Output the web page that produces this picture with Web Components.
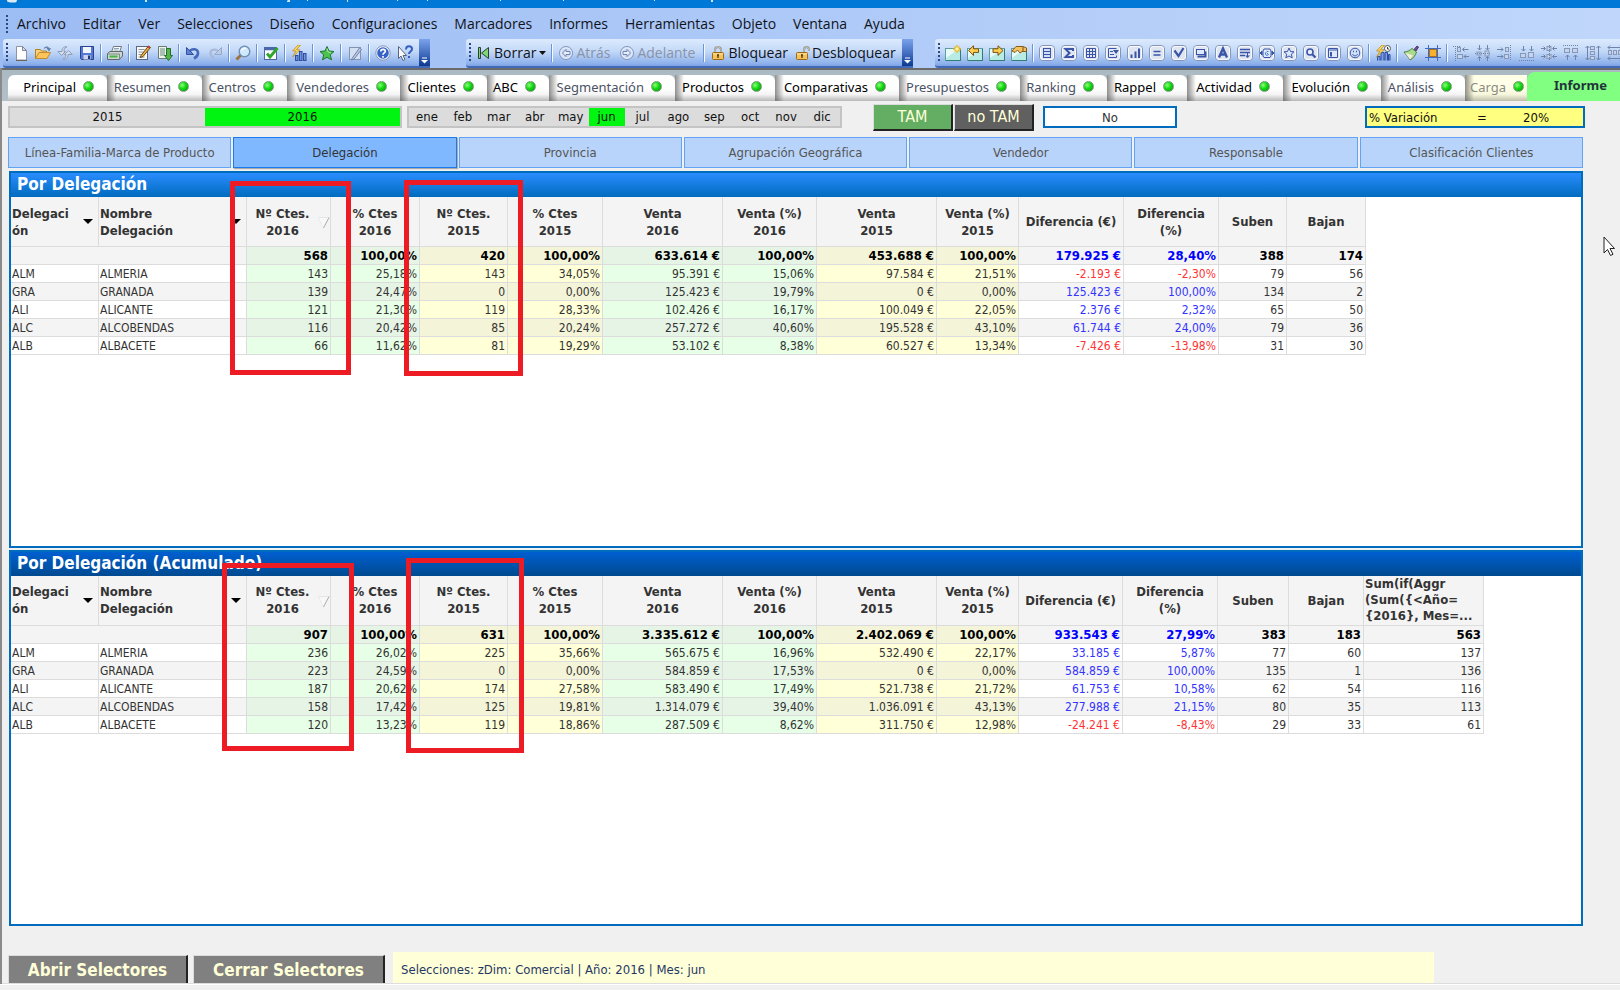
<!DOCTYPE html>
<html lang="es">
<head>
<meta charset="utf-8">
<title>Informe por Delegación</title>
<style>
  html, body { margin: 0; height: 100%; }
  body { font-family: "DejaVu Sans Condensed", "DejaVu Sans", sans-serif; font-size: 12px; color: #333; background: #f0f0f0; overflow: hidden; }
</style>
</head>
<body>
<report-app></report-app>

<script>
const define = (name, css, html) => customElements.define(name, class extends HTMLElement {
  connectedCallback() {
    if (this.shadowRoot) return;
    const root = this.attachShadow({ mode: "open" });
    root.innerHTML = `<style>*{box-sizing:border-box}button,input{font:inherit;color:inherit;margin:0}${css}</style>${typeof html === "function" ? html(this) : html}`;
  }
});

/* ---------- toolbar icons, 16 x 16 ---------- */
const boxed = inner => `<rect x=".5" y=".5" width="15" height="15" rx="3.5" fill="#dfe6f2" stroke="#8494b4"/><rect x="1.5" y="1.5" width="13" height="13" rx="2.5" fill="none" stroke="#f6f9ff"/>${inner}`;
const B = "#3a55a8";
const sheet = inner => `<rect x=".5" y="3.5" width="15" height="12" fill="#b9ebe5" stroke="#5b9ea0"/><path d="M1 13V4h13z" fill="#e6faf7"/><path d="M15.5 4v11.5H1" fill="none" stroke="#2f7f74"/>${inner}`;
const lock = shackle => `<path d="${shackle}" fill="none" stroke="#8b8b86" stroke-width="2"/><path d="${shackle}" fill="none" stroke="#e2e0d6" stroke-width=".8"/><rect x="2.5" y="7.5" width="11" height="7" rx="1" fill="#f5c25a" stroke="#9c6a1c"/><path d="M3 9h10" stroke="#fde6a8"/><path d="M8 9.5v3.5M7 10h2" stroke="#5a3b0c" stroke-width="1.4"/>`;
const circ = d => `<circle cx="8" cy="8" r="6.5" fill="#cddcf5" stroke="#8494b8"/><circle cx="8" cy="8" r="5.2" fill="none" stroke="#eef3fd" stroke-width=".8"/><path d="${d}" fill="#e8effc" stroke="#7285b2"/>`;
const bolt = '<path d="M7 0 1.5 6H5L1.5 12 9 4.800H5.500L9.500 0z" fill="#ffd95c" stroke="#b88414" stroke-width=".7"/>';
const AL = "#8797b4";
const al = (rects, lines) => rects.map(r => `<rect x="${r[0]}" y="${r[1]}" width="${r[2]}" height="${r[3]}" fill="#c3d4f3" stroke="${AL}"/>`).join("") + `<path d="${lines[0]}" fill="none" stroke="#6f83aa"/>` + (lines[1] ? `<path d="${lines[1]}" fill="none" stroke="#6f83aa" stroke-dasharray="1 1"/>` : "");
const ICONS = {
  new: '<path d="M3.500 1.500h6l4 4v9.500h-10z" fill="#fff" stroke="#8b93a5"/><path d="M9.500 1.500v4h4z" fill="#dce3f0" stroke="#7c8496"/><path d="M3 15.500h11" stroke="#6b6258"/>',
  open: '<path d="M.5 13.500V4.500h5l1 1.500h5v2" fill="#f6d27a" stroke="#b5811f"/><path d="M.5 13.500 4 7.500h11.500l-3.500 6z" fill="#fdc45c" stroke="#c4892a"/><path d="M9 3.500c2-2.500 5-1.500 5 1.500M12 3l2 2.500L15.500 3" fill="none" stroke="#5a7ea8" stroke-width="1.200"/>',
  reload: '<path d="M5 6.500 .8 6.500 4.500 10.500 8.500 6.500H7C7 3.500 8 2.500 10 2 6.500 1 5 3.500 5 6.500z" fill="#d3dcec" stroke="#8e9cb8"/><path d="M11 9.500h4.200L11.500 5.500 7.500 9.500H9c0 3-1 4-3 4.500 3.500 1 5-1.500 5-4.500z" fill="#d3dcec" stroke="#8e9cb8"/>',
  save: '<path d="M1.500 1.500h13v13h-12l-1-1z" fill="#5379d8" stroke="#2c418c"/><rect x="4" y="2" width="8" height="6" fill="#f2f5fd"/><rect x="4.500" y="10" width="7" height="4.500" fill="#c9d3ea"/><rect x="9" y="10.500" width="2" height="3.500" fill="#24366f"/>',
  print: '<path d="M4.500 7 6.500 1.500h8L12.500 7z" fill="#fff" stroke="#6c7787"/><path d="M7 3.500h5M6.500 5h5" stroke="#8fa5bb"/><path d="M.5 8.500 3 6.500h12.500V11l-3 3.500H.5z" fill="#cfd6d2" stroke="#5d6b68"/><path d="M1 9h11.500v5.500" fill="none" stroke="#7c8a86"/><rect x="2.500" y="10.500" width="8" height="2" fill="#43b544"/>',
  script: '<rect x="1.500" y="1.500" width="11" height="13" fill="#f7faf3" stroke="#5a6784"/><path d="M3.500 4.500h6M3.500 7h5M3.500 9.500h3M3.500 12h6" stroke="#8893a8"/><path d="M6 10.500 13.500 1l2 1.500L8 11.500l-2.500 1z" fill="#f0b740" stroke="#6b4014"/><path d="m13 1.500 2 1.500" stroke="#c5403a" stroke-width="2"/>',
  partial: '<path d="M1.500 1.500h8v12h-8z" fill="#eef6ec" stroke="#6d7b74"/><path d="M3 4h5M3 6h5M3 8h5M3 10h5" stroke="#68887c"/><path d="M9.500 3.500h4v7h2L11.500 15.500 7.500 10.500h2z" fill="#55b54a" stroke="#23702a"/>',
  undo: '<path d="M4 7.500C6 3 13.500 3 13 8.500c-.3 2.500-2 4-4 5" fill="none" stroke="#4668bc" stroke-width="2.600"/><path d="M1.500 2.500v7h7z" fill="#5e80d2" stroke="#35509c"/>',
  redo: '<path d="M12 7.500C10 3.500 3 3.500 3.500 8.500c.3 2.500 2 4 4 5" fill="none" stroke="#a9b9d8" stroke-width="2.400"/><path d="M14.500 2.500v7h-7z" fill="#bccae4" stroke="#98a9c9"/>',
  search: '<path d="M1.500 14.500 6.500 9.500" stroke="#a0713a" stroke-width="3"/><circle cx="9.500" cy="6.500" r="5.300" fill="#cfeafd" stroke="#6f8fb4" stroke-width="1.400"/><path d="M6.500 5.500c1-2 3-2.500 4.500-2" fill="none" stroke="#fff" stroke-width="1.400"/>',
  check: '<rect x="1.500" y="2.500" width="12" height="12" fill="#fff" stroke="#4a68a8"/><path d="M1.500 4h12" stroke="#4a68a8" stroke-width="2.500"/><path d="m4 8.500 3 3.500 7.500-9" fill="none" stroke="#2fa52c" stroke-width="2.800"/>',
  chart: '<rect x="4.500" y="10.500" width="2.500" height="5" fill="#6f92dc" stroke="#2c4da0"/><rect x="8.500" y="6.500" width="2.500" height="9" fill="#6f92dc" stroke="#2c4da0"/><rect x="12.500" y="8.500" width="2.500" height="7" fill="#6f92dc" stroke="#2c4da0"/>' + bolt,
  star: '<path d="m8 1.500 2 4.500 5 .5-3.700 3.300 1.200 5L8 12.300l-4.500 2.500 1.200-5L1 6.500 6 6z" fill="#4cc34f" stroke="#1c7434"/><path d="m8 3.500 1 3.500 3 .5" fill="none" stroke="#a6eba0"/>',
  note: '<rect x="2.500" y="2.500" width="11" height="12" fill="#d3dff3" stroke="#8593b2"/><path d="M5 13.500 12.500 3l2 1.500L7 14l-2.500 1z" fill="#bccbe6" stroke="#6f80a4"/>',
  help: '<circle cx="8" cy="8" r="7.200" fill="#f2f6ff" stroke="#8996b4"/><circle cx="8" cy="8" r="5.800" fill="#3762c8"/><path d="M5.800 6.500c0-3 4.500-2.800 4.500-.3C10.300 8 8 7.800 8 9.800M8 11v1.800" fill="none" stroke="#fff" stroke-width="1.700"/>',
  whats: '<path d="M1.500 1.500v12L4 11l2 4.500 2-1L6 10.500h3.500z" fill="#f7f9fd" stroke="#59657f"/><path d="M9 4.500C9 0 15 .5 15 4c0 2.500-3 2.500-3 5M12 11v2" fill="none" stroke="#3560c0" stroke-width="2"/>',
  clear: '<path d="M2.500 2.500h2v11h-2zM12.500 2.500v11l-7-5.500z" fill="#7fd674" stroke="#27402f"/>',
  back: circ("M8 4.500 4.500 8 8 11.500V9.500h4v-3H8z"),
  fwd: circ("M8 4.500 11.500 8 8 11.500V9.500H4v-3h4z"),
  lock: lock("M5 8V4.500C5 1 11 1 11 4.500V8"),
  unlock: lock("M10 8V5c0-4 5-4 5 0v1"),
  sheetnew: sheet('<path d="M12 0v8M8 4h8M9.500 1.500l5 5M14.500 1.500l-5 5" stroke="#e8b820" stroke-width="1.300"/><circle cx="12" cy="4" r="1.800" fill="#fff3a0"/>'),
  sheetprev: sheet('<path d="M1.500 5.500 6.500.8v3h5v3.600h-5v3z" fill="#fbd04e" stroke="#7d4f12"/>'),
  sheetnext: sheet('<path d="M14 5.500 9 .8v3H4v3.600h5v3z" fill="#fbd04e" stroke="#7d4f12"/>'),
  sheetprop: sheet('<path d="M1 6 5 1.500h7L15.500 3v3.500H11L9 8 6.500 5 4 7.500z" fill="#f3c25c" stroke="#8a5a1c"/><path d="M12 2v4" stroke="#76501e"/>'),
  list: boxed(`<rect x="4.500" y="3.500" width="7" height="9" fill="#cfddf7" stroke="${B}"/><path d="M5 6.500h6M5 9.500h6" stroke="${B}"/>`),
  sigma: boxed(`<path d="M12 6V4H4.500L8.500 8 4.500 12H12V10" fill="none" stroke="${B}" stroke-width="2"/>`),
  grid: boxed(`<path d="M3.500 3.500h9v9h-9zM3.500 6.500h9M3.500 9.500h9M6.500 3.500v9M9.500 3.500v9" fill="none" stroke="${B}"/>`),
  multi: boxed(`<path d="M3.500 3.500h8M3.500 3.500v9h8v-2M5 6.500h3M5 9.500h4" fill="none" stroke="${B}"/><path d="M8 5h6l-3 4z" fill="${B}"/>`),
  bars: boxed(`<path d="M4.500 13V9.500M8.500 13V6.500M12 13V3.500" stroke="${B}" stroke-width="2"/>`),
  equal: boxed(`<path d="M4.500 6.500h7M4.500 10h7" stroke="${B}" stroke-width="1.600"/>`),
  tick: boxed(`<path d="M3.500 5.500 7.500 11l5-8" fill="none" stroke="${B}" stroke-width="2.200"/>`),
  btn: boxed(`<path d="M4.500 11.500h8v-5" fill="none" stroke="${B}" stroke-width="2"/><rect x="3.500" y="4.500" width="8" height="5" fill="#dfe9fb" stroke="${B}"/>`),
  text: boxed(`<path d="M4 12.500 8 3.500l4 9M5.500 9.500h5" fill="none" stroke="${B}" stroke-width="2.400"/>`),
  lines: boxed(`<path d="M3 4.500h10M3 7.500h10M3 10.500h5" stroke="${B}" stroke-width="1.400"/><path d="M8 10.500h5L10.500 13z" fill="${B}"/><path d="M10.500 8v3" stroke="${B}"/>`),
  slider: boxed(`<path d="M5 4h6l1 2v5l-1 1.500H5L4 11V6z" fill="#dfe9fb" stroke="${B}"/><path d="m3 6-2 2 2 2zM13 6l2 2-2 2z" fill="${B}" stroke="${B}"/><path d="M9.500 6.500H8L6.500 8v1.500L8 10.500l1.500-1L8 8" fill="none" stroke="#3f7fd0"/>`),
  bmark: boxed(`<path d="m8 3 1.500 3.500 3.500.3-2.700 2.400.9 3.600L8 11l-3.200 1.800.9-3.600L3 6.800l3.500-.3z" fill="#dbe8fb" stroke="${B}"/>`),
  find: boxed(`<circle cx="7" cy="7" r="3" fill="#e8f0fd" stroke="${B}" stroke-width="1.600"/><path d="m9.500 9.500 3 3" stroke="${B}" stroke-width="2.200"/>`),
  panel: boxed(`<path d="M3.500 3.500h9v9h-9z" fill="#dfe9fb" stroke="${B}"/><path d="M3.500 5h9" stroke="${B}"/><rect x="5" y="7" width="2" height="4.500" fill="${B}"/>`),
  smile: boxed(`<circle cx="8" cy="8" r="4.800" fill="#cfe0fa" stroke="${B}"/><path d="M5.500 9c1 2.500 4 2.500 5 0" fill="none" stroke="${B}"/><path d="M6 6.500h1M9 6.500h1" stroke="${B}" stroke-width="1.600"/>`),
  chart2: '<path d="M6 15.500V7.500h3v8M10 15.500v-8h2.500v8M13.500 15.500v-6H15v6M2.500 15.500v-4H5v4" fill="#7d9fe4" stroke="#2c4da0"/><circle cx="12.500" cy="3.500" r="3" fill="#fff" stroke="#555"/><path d="M12.500 2v2H14" fill="none" stroke="#333"/>' + bolt,
  brush: '<path d="M11 4.500 14 1l1.500 1-2.500 4z" fill="#6f4f94" stroke="#51376f"/><path d="M1 7c3 0 6-1.500 8-3.500L13.500 7C12.500 10.500 10 13.500 7 15 5.500 12 3 9.500 1 7z" fill="#a9dc8e" stroke="#4d7f43"/><path d="m2 7.500 5 7 3-4z" fill="#f2ecd8"/>',
  snap: '<path d="M0 3.500h16M0 12.500h16M3.500 0v16M12.500 0v16" stroke="#3f6cc0"/><rect x="4.500" y="4.500" width="7" height="7" fill="#f8b030" stroke="#a8701c"/>',
  a1: al([[4.500,2.500,3,4],[4.500,9.500,5,4]], ["M9.500 4.500h6M11.500 2.500l-2 2 2 2M11 11.500h5M13 9.500l-2 2 2 2", "M2.500 1v15M0 1.500h8"]),
  a2: al([[2,7,4,3],[10,6,4,5]], ["M4.500 0v5M2.500 3l2 2 2-2M4.500 16v-4M2.500 13.500l2-2 2 2M12.500 0v4.500M10.500 3l2 2 2-2M12.500 16v-4M10.500 13.500l2-2 2 2", "M0 8.500h16"]),
  a3: al([[8.500,2.500,3,4],[7.500,9.500,4,4]], ["M0 4.500h6M4 2.500l2 2-2 2M0 11.500h6M4 9.500l2 2-2 2", "M13.500 0v16"]),
  a4: al([[1.500,8.500,5,4],[9.500,7.500,5,5]], ["M4.500 1v5M2.500 4l2 2 2-2M12.500 1v5M10.500 4l2 2 2-2", "M0 15.500h16"]),
  a5: al([[6,1.500,4,4],[6,9.500,4,4]], ["M0 3.500h4M2.500 1.500l2 2-2 2M16 3.500h-4M13.500 1.500l-2 2 2 2M0 11.500h4M2.500 9.500l2 2-2 2M16 11.500h-4M13.500 9.500l-2 2 2 2", "M8.500 0v16"]),
  a6: al([[1.500,3.500,5,4],[9.500,3.500,5,4]], ["M4.500 15v-5M2.500 12l2-2 2 2M12.500 15v-5M10.500 12l2-2 2 2", "M0 .5h16"]),
  a7: al([[5.500,1.500,4,3],[5.500,6.500,4,3],[5.500,11.500,4,3]], ["M2.500 1v14M.5 3l2-2 2 2M.5 13l2 2 2-2M13.500 1v14M11.500 3l2-2 2 2M11.500 13l2 2 2-2"]),
  a8: al([[1.500,5.500,3,4],[6.500,5.500,3,4],[11.500,5.500,3,4]], ["M1 2.500h14M3 .5l-2 2 2 2M13 .5l2 2-2 2M1 13.500h14M3 11.500l-2 2 2 2M13 11.500l2 2-2 2"])
};

define("tool-icon", `
  :host { display: block; flex: none; }
  button { display: flex; align-items: center; gap: 2px; height: 22px; padding: 0 3px; border: 0; background: none; white-space: nowrap; }
  svg { display: block; flex: none; width: 16px; height: 16px; }
  :host([off]) button { color: #8a93a8; padding-right: 6px; }`,
  el => `<button type="button" aria-label="${el.getAttribute("name")}"><svg viewBox="0 0 16 16" aria-hidden="true">${ICONS[el.getAttribute("name")]}</svg><slot></slot></button>`);

define("tool-sep", `:host { display: block; flex: none; box-sizing: border-box; width: 2px; height: 18px; margin: 0 2px; background: #6c94d8; border-right: 1px solid #f4f8ff; }`, "");

define("tool-bar", `
  :host { display: flex; align-items: center; flex: none; box-sizing: border-box; height: 29px; border-radius: 3px 0 0 3px; overflow: hidden;
    background: linear-gradient(#dceafd, #c3d9f8 45%, #8fb2ec 90%, #7da2e4); border-bottom: 2px solid #4269b8; font: 14px "Open Sans", "Noto Sans", sans-serif; color: #10131a; }
  .grip { flex: none; width: 2px; height: 20px; margin: 0 2px 0 3px; background: repeating-linear-gradient(#2b4789 0 2px, transparent 2px 4px); }
  .cap { align-self: stretch; display: flex; align-items: flex-end; justify-content: center; width: 11px; margin-left: 3px; background: linear-gradient(#7ba3ec, #3c66b8 60%, #0b3a90); }
  :host([nocap]) .cap { display: none; }`,
  `<span class="grip"></span><slot></slot><span class="cap"><svg width="7" height="9" viewBox="0 0 7 9"><path d="M1 1h5" stroke="#fff"/><path d="M0 3h7L3.500 6.500z" fill="#fff"/></svg></span>`);

define("window-title", `:host { display: block; flex: none; height: 8px; background: #0078d7; } svg { display: block; }`,
  `<svg width="720" height="8" viewBox="0 0 720 8" aria-hidden="true"><path d="M7 0h10c0 3-2 2.500-5 2.500S7 2.500 7 0z" fill="#dfe9f2"/><path d="M145 0h2v2h-2zM288 0h2v2h-3v-1zM307 0h1v1h-1zM347 0h1v2h-1zM397 0h1v1h-1zM427 0h1v1h-1zM500 0h1v1h-1zM563 0h1v1h-1zM654 0h1v1h-1zM711 0h2v2h-2z" fill="#cfe4f7"/></svg>`);

define("menu-bar", `
  :host { display: flex; align-items: center; flex: none; box-sizing: border-box; height: 31px; padding-left: 6px; font: 14px/20px "Open Sans", "Noto Sans", sans-serif; color: #10131a; }
  .grip { width: 2px; height: 18px; background: repeating-linear-gradient(#2b4789 0 2px, transparent 2px 4px); }
  nav { display: flex; gap: 17px; margin-left: 9px; }
  button { border: 0; padding: 0; background: none; }`,
  `<span class="grip"></span><nav>${"Archivo,Editar,Ver,Selecciones,Diseño,Configuraciones,Marcadores,Informes,Herramientas,Objeto,Ventana,Ayuda".split(",").map(t => `<button type="button">${t}</button>`).join("")}</nav>`);

define("sheet-tab", `
  :host { display: block; flex: none; height: 26px; }
  a { display: flex; align-items: center; gap: 7px; height: 100%; padding: 0 13px 3px 7px; justify-content: flex-end; overflow: hidden;
    border-radius: 0 6px 0 0; text-decoration: none; white-space: nowrap; color: #000;
    background: linear-gradient(90deg, rgba(70,70,70,.6), rgba(120,120,120,0) 9px), linear-gradient(#fff 50%, #f4f4f4 75%, #b8b8b8); }
  :host([first]) a { border-radius: 6px 6px 0 0; background: linear-gradient(#fff 50%, #f4f4f4 75%, #b8b8b8); }
  :host([soft]) a { color: #4a5265; }
  :host([dim]) a { color: #8b8b80; padding-right: 3px; border-radius: 0; background: linear-gradient(90deg, rgba(70,70,70,.6), rgba(120,120,120,0) 9px), linear-gradient(#ffffe8 50%, #f6f6dc 75%, #bdbdaa); }
  :host([current]) { flex: 1; height: 29px; }
  :host([current]) a { justify-content: flex-start; padding: 0 0 3px 27px; font-weight: bold; color: #22333b; border-radius: 8px 0 0 0; background: #80ff80; }
  i { flex: none; width: 11px; height: 11px; border-radius: 50%; background: radial-gradient(circle at 35% 35%, #8dff7a, #12d812 45%, #068f06); border: 1px solid #7d9a7d; }
  :host([current]) i { display: none; }`,
  `<a href="#hoja"><slot></slot><i></i></a>`);

const TABS = [["Principal",99,"first"],["Resumen",95,"soft"],["Centros",85,"soft"],["Vendedores",113,"soft"],["Clientes",87,""],["ABC",62,""],["Segmentación",126,"soft"],["Productos",100,""],["Comparativas",124,""],["Presupuestos",121,"soft"],["Ranking",87,"soft"],["Rappel",80,""],["Actividad",96,""],["Evolución",98,""],["Análisis",84,"soft"],["Carga",62,"dim"],["Informe",0,"current"]];
define("sheet-tabs", `
  :host { display: flex; align-items: flex-end; flex: none; box-sizing: border-box; height: 33px; padding-left: 6px; background: linear-gradient(#6a6a6a 0 2px, #aab9c2 2px, #b2c1c9); font: 13px "Noto Sans", "Open Sans", sans-serif; }`,
  TABS.map(([t, w, a]) => `<sheet-tab ${a} ${w ? `style="width:${w}px"` : ""}>${t}</sheet-tab>`).join(""));

define("choice-list", `
  :host { display: block; box-sizing: border-box; height: 22px; border: 2px solid #c4c4c4; background: #dcdcdc; font-size: 13px; color: #111; }
  div { display: grid; grid-auto-flow: column; grid-auto-columns: 1fr; height: 100%; }
  button { border: 0; padding: 0; background: none; line-height: 16px; }
  [aria-pressed=true] { background: #00f510; }`,
  el => `<div>${el.getAttribute("items").split(",").map(t => `<button type="button" aria-pressed="${t === el.getAttribute("value")}">${t}</button>`).join("")}</div>`);

define("push-button", `
  :host { display: block; }
  button { display: block; width: 100%; height: 100%; padding: 0; border: 1px solid; border-color: #dcdcdc #222 #222 #dcdcdc; border-width: 1px 2px 2px 1px; background: var(--face, #808080); color: #ffffd8; font-size: 16px; white-space: nowrap; }
  :host([strong]) button { font-weight: bold; font-size: 17px; border-bottom-width: 0; }`,
  `<button type="button"><slot></slot></button>`);

define("dimension-bar", `
  :host { display: flex; gap: 2px; height: 31px; }
  button { flex: 1 1 0; padding: 0; border: 1px solid #62a3f5; background: #b8d4fa; color: #555; font-size: 13px; white-space: nowrap; }
  .on { background: #80b8ff; border-color: #1a7af0; color: #333; box-shadow: 1px 1px 1px #aaa; }`,
  "Línea-Familia-Marca de Producto,Delegación,Provincia,Agrupación Geográfica,Vendedor,Responsable,Clasificación Clientes".split(",").map(t => `<button type="button" class="${t === "Delegación" ? "on" : ""}">${t}</button>`).join(""));

define("variation-field", `
  :host { display: flex; align-items: center; box-sizing: border-box; width: 220px; height: 22px; border: 2px solid #006cbe; background: #ffff80; color: #111; font-size: 13px; padding-left: 2px; }
  label { width: 108px; } span { width: 46px; }
  input { width: 50px; height: 16px; padding: 0; border: 0; background: none; }`,
  `<label for="v">% Variación</label><span>=</span><input id="v" value="20%">`);

/* A framed chart object; annotations are slotted over its table. */
define("chart-panel", `
  :host { display: block; position: relative; flex: 1 1 0; min-height: 0; border: 2px solid #006cbe; background: #fff; }
  h2 { margin: 0; height: 24px; padding-left: 6px; font-size: 17px; line-height: 23px; color: #fff; background: linear-gradient(#2a8cff, #006cbe); }
  :host([dark]) h2 { background: linear-gradient(#005fd0, #004a90); }`,
  el => `<h2>${el.getAttribute("heading")}</h2><slot></slot>`);

define("red-mark", `:host { display: block; position: absolute; box-sizing: border-box; border: 5px solid #ed1c24; pointer-events: none; }`, "");

define("delegation-table", `
  :host { display: block; }
  table { border-collapse: separate; border-spacing: 0; table-layout: fixed; width: 0; }
  th, td { padding: 0 2px 0 1px; border: solid #dcdcdc; border-width: 0 1px 1px 0; white-space: nowrap; overflow: hidden; }
  thead th { position: relative; height: 50px; padding: 0; background: #f4f4f4; font-size: 13px; line-height: 17px; color: #333; white-space: normal; }
  thead th.l { text-align: left; padding-left: 1px; }
  thead th.l span { display: block; width: 90px; overflow-wrap: anywhere; }
  thead th.l .code { width: 62px; }
  thead th.s { padding-right: 12px; }
  thead th.x { line-height: 16px; }
  th svg { position: absolute; right: 5px; top: 22px; }
  th.s svg { right: 0; top: 20px; }
  tbody th, tbody td { height: 18px; line-height: 17px; font-weight: normal; text-align: right; }
  tbody tr:not(.total) > * { padding-top: 1px; line-height: 16px; }
  tbody th { text-align: left; }
  tr.total td { font-weight: bold; font-size: 13px; color: #000; }
  .g { background: #e6ffe6; } .y { background: #ffffd8; }
  .alt th, .alt td { background: #f4f4f4; }
  .alt .g { background: #e6f4e6; } .alt .y { background: #f4f4d8; }
  tbody .pos { color: #33f; } tbody .neg { color: #f33; } tr.total td.pos { color: #00f; }`,
  el => {
    const d = DATA[el.getAttribute("source")];
    const arrow = '<svg width="10" height="5" viewBox="0 0 10 5"><path d="M0 0h10L5 5z" fill="#000"/></svg>';
    const sort = '<svg width="12" height="12" viewBox="0 0 12 12"><path d="M11 .5H.5L5.500 11" fill="none" stroke="#e6e6e6"/><path d="M1 1h9.500L5.500 11z" fill="#f8f8f8"/><path d="M11 .5 5.500 11" stroke="#aaa"/></svg>';
    const heads = ["Nº Ctes.<br>2016","% Ctes<br>2016","Nº Ctes.<br>2015","% Ctes<br>2015","Venta<br>2016","Venta (%)<br>2016","Venta<br>2015","Venta (%)<br>2015","Diferencia (€)","Diferencia<br>(%)","Suben","Bajan"];
    const cls = ["g","g","y","y","g","g","y","y"];
    const tone = (v, j) => j === 8 || j === 9 ? (v[0] === "-" ? "neg" : "pos") : (cls[j] || "");
    const cells = r => r.map((v, j) => `<td class="${tone(v, j)}">${v}</td>`).join("");
    return `<table><colgroup>${d.cols.map(w => `<col style="width:${w}px">`).join("")}</colgroup>
      <thead><tr><th class="l"><span class="code">Delegación</span>${arrow}</th><th class="l"><span>Nombre Delegación</span>${arrow}</th>
      ${heads.map((h, i) => `<th class="${i ? "" : "s"}">${h}${i ? "" : sort}</th>`).join("")}${d.extra ? `<th class="l x">${d.extra}</th>` : ""}</tr></thead>
      <tbody><tr class="total alt"><td colspan="2"></td>${cells(d.total)}</tr>
      ${d.rows.map((r, i) => `<tr class="${i % 2 ? "alt" : ""}"><th>${r[0]}</th><th>${r[1]}</th>${cells(r.slice(2))}</tr>`).join("")}</tbody></table>`;
  });

const split = s => s.split("|");
const DATA = {
  mes: {
    cols: [88,148,84,89,88,95,120,94,120,82,105,95,68,79],
    total: split("568|100,00%|420|100,00%|633.614 €|100,00%|453.688 €|100,00%|179.925 €|28,40%|388|174"),
    rows: ["ALM|ALMERIA|143|25,18%|143|34,05%|95.391 €|15,06%|97.584 €|21,51%|-2.193 €|-2,30%|79|56",
      "GRA|GRANADA|139|24,47%|0|0,00%|125.423 €|19,79%|0 €|0,00%|125.423 €|100,00%|134|2",
      "ALI|ALICANTE|121|21,30%|119|28,33%|102.426 €|16,17%|100.049 €|22,05%|2.376 €|2,32%|65|50",
      "ALC|ALCOBENDAS|116|20,42%|85|20,24%|257.272 €|40,60%|195.528 €|43,10%|61.744 €|24,00%|79|36",
      "ALB|ALBACETE|66|11,62%|81|19,29%|53.102 €|8,38%|60.527 €|13,34%|-7.426 €|-13,98%|31|30"].map(split)
  },
  acumulado: {
    cols: [88,148,84,89,88,95,120,94,120,82,104,95,71,75,120],
    extra: "Sum(if(Aggr<br>(Sum({&lt;Año=<br>{2016}, Mes=...",
    total: split("907|100,00%|631|100,00%|3.335.612 €|100,00%|2.402.069 €|100,00%|933.543 €|27,99%|383|183|563"),
    rows: ["ALM|ALMERIA|236|26,02%|225|35,66%|565.675 €|16,96%|532.490 €|22,17%|33.185 €|5,87%|77|60|137",
      "GRA|GRANADA|223|24,59%|0|0,00%|584.859 €|17,53%|0 €|0,00%|584.859 €|100,00%|135|1|136",
      "ALI|ALICANTE|187|20,62%|174|27,58%|583.490 €|17,49%|521.738 €|21,72%|61.753 €|10,58%|62|54|116",
      "ALC|ALCOBENDAS|158|17,42%|125|19,81%|1.314.079 €|39,40%|1.036.091 €|43,13%|277.988 €|21,15%|80|35|113",
      "ALB|ALBACETE|120|13,23%|119|18,86%|287.509 €|8,62%|311.750 €|12,98%|-24.241 €|-8,43%|29|33|61"].map(split)
  }
};

const ic = names => names.split(" ").map(n => n === "|" ? "<tool-sep></tool-sep>" : `<tool-icon name="${n}"></tool-icon>`).join("");
define("report-app", `
  :host { display: flex; flex-direction: column; height: 100vh; position: relative; overflow: hidden; }
  .chrome { flex: none; background: linear-gradient(90deg, #9cbcf4, #c0d7fb); }
  .bars { display: flex; padding-left: 3px; height: 29px; }
  .bars tool-bar:nth-child(2) { margin-left: 36px; }
  .bars tool-bar:nth-child(3) { margin-left: 22px; flex: 1 0 0; min-width: 0; }
  .caret { flex: none; width: 10px; height: 4px; }
  .body { flex: 1; min-height: 0; display: flex; flex-direction: column; border-left: 2px solid #8a8a8a; background: #f0f0f0; }
  .filters { display: flex; align-items: center; flex: none; height: 36px; padding: 0 35px 4px 6px; }
  choice-list.years { width: 394px; } choice-list.months { width: 435px; margin-left: 5px; }
  .tam { width: 80px; height: 27px; --face: #64ae64; margin-left: 31px; } .notam { width: 80px; height: 27px; --face: #606060; margin-left: 1px; }
  .no { width: 134px; height: 22px; margin-left: 9px; padding: 0; border: 2px solid #006cbe; background: #fff; font-size: 13px; line-height: 17px; }
  variation-field { margin-left: auto; }
  dimension-bar { margin: 0 37px 3px 6px; flex: none; }
  .panels { flex: 1; min-height: 0; display: flex; flex-direction: column; gap: 2px; margin: 0 37px 0 7px; }
  footer { display: flex; align-items: flex-end; flex: none; height: 58px; padding-left: 6px; padding-right: 186px; border-bottom: 1px solid #ddd; }
  footer push-button { height: 28px; width: 180px; } footer push-button + push-button { width: 192px; margin-left: 5px; }
  output { flex: 1; height: 31px; margin-left: 8px; padding-left: 8px; background: #ffffd8; color: #1f3864; font-size: 13px; line-height: 36px; }
  .edge { flex: none; height: 6px; background: #f0f0f0; border-top: 1px solid #fff; }
  .pointer { position: absolute; left: 1603px; top: 236px; }`,
  `<window-title></window-title>
  <div class="chrome"><menu-bar></menu-bar>
    <div class="bars">
      <tool-bar>${ic("new open reload save | print | script partial | undo redo | search | check | chart | star | note | help whats")}</tool-bar>
      <tool-bar><tool-icon name="clear">Borrar</tool-icon><svg class="caret" viewBox="0 0 10 4"><path d="M0 0h7L3.500 4z" fill="#111"/></svg><tool-sep></tool-sep>
        <tool-icon name="back" off>Atrás</tool-icon><tool-icon name="fwd" off>Adelante</tool-icon><tool-sep></tool-sep>
        <tool-icon name="lock">Bloquear</tool-icon><tool-icon name="unlock">Desbloquear</tool-icon></tool-bar>
      <tool-bar nocap>${ic("sheetnew sheetprev sheetnext sheetprop | list sigma grid multi bars equal tick btn text lines slider bmark find panel smile | chart2 | brush snap | a1 a2 a3 a4 a5 a6 a7 a8")}</tool-bar>
    </div>
  </div>
  <div class="body">
    <sheet-tabs></sheet-tabs>
    <div class="filters">
      <choice-list class="years" items="2015,2016" value="2016"></choice-list>
      <choice-list class="months" items="ene,feb,mar,abr,may,jun,jul,ago,sep,oct,nov,dic" value="jun"></choice-list>
      <push-button class="tam">TAM</push-button><push-button class="notam">no TAM</push-button>
      <button type="button" class="no">No</button>
      <variation-field></variation-field>
    </div>
    <dimension-bar></dimension-bar>
    <div class="panels">
      <chart-panel heading="Por Delegación"><delegation-table source="mes"></delegation-table>
        <red-mark style="left:219px;top:8px;width:121px;height:194px"></red-mark>
        <red-mark style="left:393px;top:7px;width:119px;height:196px"></red-mark></chart-panel>
      <chart-panel dark heading="Por Delegación (Acumulado)"><delegation-table source="acumulado"></delegation-table>
        <red-mark style="left:211px;top:11px;width:132px;height:188px"></red-mark>
        <red-mark style="left:395px;top:6px;width:118px;height:195px"></red-mark></chart-panel>
    </div>
    <footer><push-button strong>Abrir Selectores</push-button><push-button strong>Cerrar Selectores</push-button>
      <output>Selecciones: zDim: Comercial | Año: 2016 | Mes: jun</output></footer>
  </div>
  <div class="edge"></div>
  <svg class="pointer" width="13" height="21" viewBox="0 0 13 21" aria-hidden="true"><path d="M1 1v16l3.500-3.500 3 6 2.500-1.200-3-5.800H11.500z" fill="#fff" stroke="#222" stroke-width="1"/></svg>`);
</script>
</body>
</html>
